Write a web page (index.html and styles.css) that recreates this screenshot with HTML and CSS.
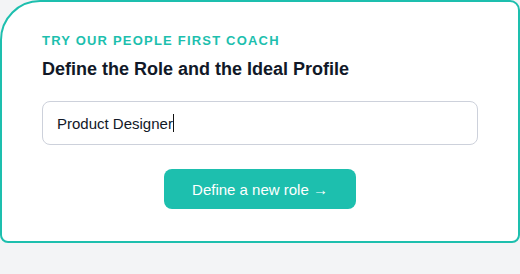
FILE: index.html
```html
<!DOCTYPE html>
<html>
<head>
<meta charset="utf-8">
<link rel="stylesheet" href="styles.css">
</head>
<body>
<div class="card">
  <div class="eyebrow">TRY OUR PEOPLE FIRST COACH</div>
  <h2 class="title">Define the Role and the Ideal Profile</h2>
  <div class="field"><span class="value">Product Designer</span><span class="caret"></span></div>
  <div class="actions">
    <button class="btn">Define a new role →</button>
  </div>
</div>
</body>
</html>
```

FILE: styles.css
```css
* { box-sizing: border-box; }
html, body { margin: 0; padding: 0; }
body {
  background: #f3f4f6;
  font-family: "Liberation Sans", Arial, sans-serif;
  width: 520px;
  height: 274px;
}
.card {
  width: 520px;
  height: 243px;
  background: #ffffff;
  border: 2px solid #1dbfae;
  border-radius: 40px 10px 8px 8px;
  padding: 31px 40px 32px 40px;
  display: flex;
  flex-direction: column;
}
.eyebrow {
  color: #1dbfae;
  font-size: 13px;
  line-height: 16px;
  font-weight: 700;
  letter-spacing: 1.2px;
}
.title {
  margin: 8px 0 0 0;
  font-size: 18px;
  line-height: 24px;
  font-weight: 700;
  color: #111827;
}
.field {
  margin-top: 20px;
  height: 44px;
  border: 1px solid #cdd1db;
  border-radius: 8px;
  display: flex;
  align-items: center;
  padding: 0 14px;
  font-size: 15px;
  color: #111827;
}
.caret {
  display: inline-block;
  width: 1px;
  height: 18px;
  background: #111;
  margin-left: 0;
}
.actions {
  margin-top: 24px;
  display: flex;
  justify-content: center;
}
.btn {
  height: 40px;
  width: 192px;
  border: none;
  border-radius: 8px;
  background: #1dbfae;
  color: #ffffff;
  font-family: "Liberation Sans", Arial, sans-serif;
  font-size: 15px;
  padding: 0;
  cursor: pointer;
}
```
